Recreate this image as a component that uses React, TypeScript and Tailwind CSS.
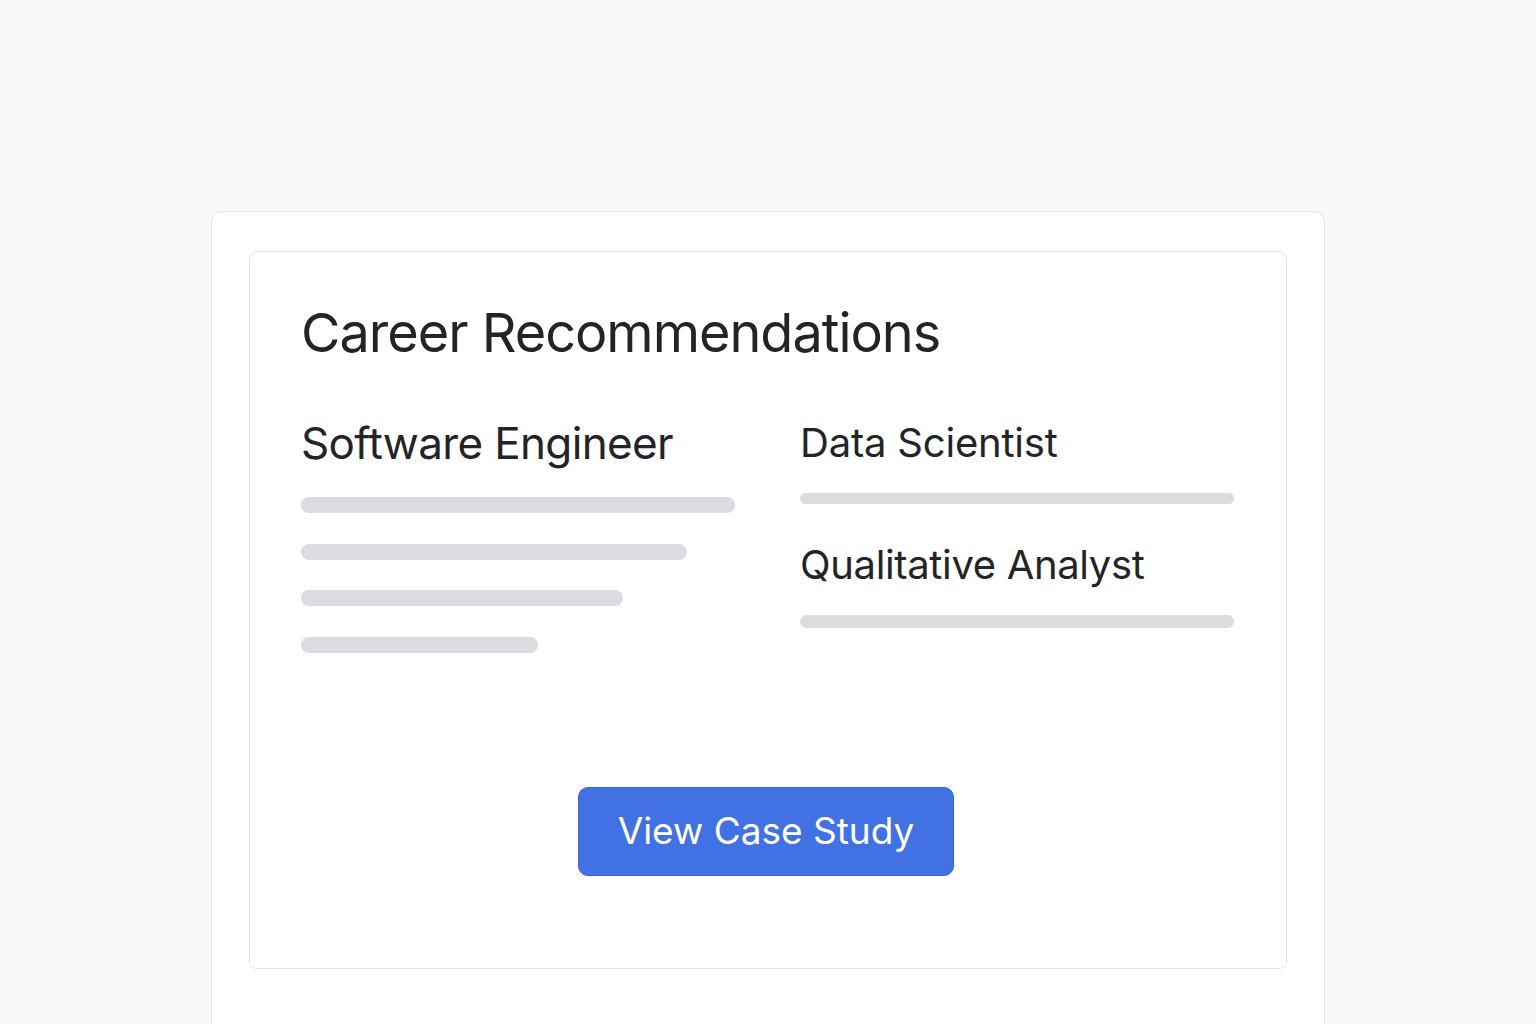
import React from "react";

export default function App() {
  const font = { fontFamily: "Inter, 'Noto Sans', sans-serif" };
  return (
    <div className="min-h-screen w-full bg-[#f8f9f9] pt-[211px]" style={font}>
      <div className="ml-[211px] w-[1114px] h-[813px] rounded-t-[10px] border border-b-0 border-[#e6e7e9] bg-white pl-[37px] pr-[37px] pt-[39px]">
        <div className="h-[718px] rounded-[8px] border border-[#e3e4e6] bg-white pl-[51px] pr-[51px] pt-[54px]">
          <h1 className="text-[54px] leading-none font-normal tracking-[-1px] text-[#232427]">
            Career Recommendations
          </h1>
          <div className="mt-[61px] grid grid-cols-[434px_434px] gap-x-[65px]">
            <div>
              <h2 className="text-[44px] leading-none font-normal tracking-[-0.65px] text-[#232427]">
                Software Engineer
              </h2>
              <div className="mt-[32px] flex flex-col gap-[30.5px]">
                <div className="h-[16px] w-[434px] rounded-full bg-[#dadce0]" />
                <div className="h-[16px] w-[386px] rounded-full bg-[#dadce0]" />
                <div className="h-[16px] w-[322px] rounded-full bg-[#dadce0]" />
                <div className="h-[16px] w-[237px] rounded-full bg-[#dadce0]" />
              </div>
            </div>
            <div className="pt-[2px]">
              <h2 className="text-[40px] leading-none font-normal tracking-[-0.2px] text-[#232427]">
                Data Scientist
              </h2>
              <div className="mt-[30px] h-[11px] w-[434px] rounded-full bg-[#dadce0]" />
              <h2 className="mt-[41px] text-[40px] leading-none font-normal tracking-[-0.35px] text-[#232427]">
                Qualitative Analyst
              </h2>
              <div className="mt-[30px] h-[13px] w-[434px] rounded-full bg-[#dadce0]" />
            </div>
          </div>
          <div className="mt-[134px] flex justify-center pr-[4px]">
            <button className="h-[89px] w-[376px] rounded-[10px] border border-[#3565d8] bg-[#4271e3] text-[37px] font-normal text-white">
              View Case Study
            </button>
          </div>
        </div>
      </div>
    </div>
  );
}
